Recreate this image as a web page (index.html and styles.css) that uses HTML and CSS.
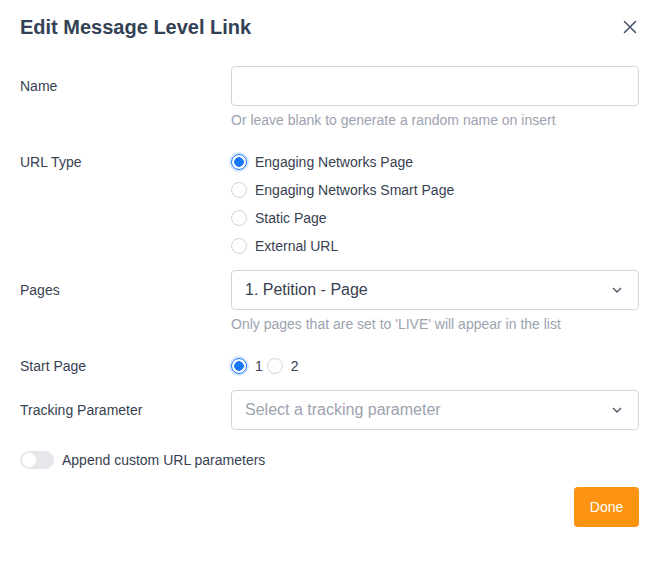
FILE: index.html
```html
<!DOCTYPE html>
<html>
<head>
    <title>Edit Message Level Link</title>
    <link rel="stylesheet" href="styles.css">
</head>
<body>
    <div class="modal">
        <div class="modal-header">
            <h1>Edit Message Level Link</h1>
            <button class="close" type="button" aria-label="Close">
                <svg width="14" height="14" viewBox="0 0 14 14"><path d="M1.5 1.5l11 11M12.5 1.5l-11 11" stroke="#475569" stroke-width="1.6" stroke-linecap="round"/></svg>
            </button>
        </div>

        <form class="modal-body">
            <div class="row">
                <label class="label" for="name">Name</label>
                <div class="field">
                    <input class="text-input" type="text" id="name">
                    <div class="help">Or leave blank to generate a random name on insert</div>
                </div>
            </div>

            <div class="row">
                <div class="label label-radio">URL Type</div>
                <div class="field radio-list">
                    <label class="radio"><input type="radio" name="urlType" checked> Engaging Networks Page</label>
                    <label class="radio"><input type="radio" name="urlType"> Engaging Networks Smart Page</label>
                    <label class="radio"><input type="radio" name="urlType"> Static Page</label>
                    <label class="radio"><input type="radio" name="urlType"> External URL</label>
                </div>
            </div>

            <div class="row">
                <label class="label" for="pages">Pages</label>
                <div class="field">
                    <div class="select" id="pages">
                        <span>1. Petition - Page</span>
                        <svg class="chevron" width="10" height="6" viewBox="0 0 10 6"><path d="M1 1l4 4 4-4" fill="none" stroke="#4b5563" stroke-width="1.4"/></svg>
                    </div>
                    <div class="help">Only pages that are set to 'LIVE' will appear in the list</div>
                </div>
            </div>

            <div class="row">
                <div class="label label-radio">Start Page</div>
                <div class="field radio-inline">
                    <label class="radio"><input type="radio" name="startPage" checked> 1</label>
                    <label class="radio"><input type="radio" name="startPage"> 2</label>
                </div>
            </div>

            <div class="row">
                <label class="label" for="tracking">Tracking Parameter</label>
                <div class="field">
                    <div class="select placeholder" id="tracking">
                        <span>Select a tracking parameter</span>
                        <svg class="chevron" width="10" height="6" viewBox="0 0 10 6"><path d="M1 1l4 4 4-4" fill="none" stroke="#4b5563" stroke-width="1.4"/></svg>
                    </div>
                </div>
            </div>

            <label class="toggle-row">
                <span class="toggle"><span class="knob"></span></span>
                Append custom URL parameters
            </label>

            <div class="modal-footer">
                <button class="btn-done" type="button">Done</button>
            </div>
        </form>
    </div>
</body>
</html>
```

FILE: styles.css
```css
html, body {
    padding: 0;
    margin: 0;
    background: white;
    font-family: "Liberation Sans", Arial, Helvetica, sans-serif;
    color: #374151;
}
.modal {
    width: 660px;
    box-sizing: border-box;
    padding: 0 21px 0 20px;
}
.modal-header {
    height: 54px;
    display: flex;
    align-items: center;
    justify-content: space-between;
}
.modal-header h1 {
    margin: 0;
    font-size: 20px;
    font-weight: bold;
    color: #334155;
}
.close {
    border: none;
    background: none;
    padding: 0;
    margin-right: 2px;
    width: 14px;
    height: 14px;
    display: flex;
}
.modal-body {
    padding-top: 12px;
    display: flex;
    flex-direction: column;
    gap: 12px;
}
.row {
    display: grid;
    grid-template-columns: 211px 1fr;
}
.label {
    font-size: 14px;
    line-height: 40px;
}
.label-radio {
    line-height: 24px;
}
.text-input, .select {
    box-sizing: border-box;
    width: 100%;
    height: 40px;
    border: 1px solid #d1d5db;
    border-radius: 4px;
    font-family: inherit;
    font-size: 16px;
    outline: none;
}
.select {
    display: flex;
    align-items: center;
    justify-content: space-between;
    padding: 0 16px 0 13px;
    color: #374151;
}
.select.placeholder {
    color: #9ca3af;
}
.help {
    margin: 4px 0 8px;
    font-size: 14px;
    line-height: 20px;
    color: #9ca3af;
}
.radio-list {
    display: flex;
    flex-direction: column;
    gap: 4px;
}
.radio-inline {
    display: flex;
    gap: 4px;
}
.radio {
    display: flex;
    align-items: center;
    height: 24px;
    font-size: 14px;
    gap: 8px;
}
.radio input {
    appearance: none;
    margin: 0;
    width: 16px;
    height: 16px;
    border: 1px solid #d1d5db;
    border-radius: 50%;
    background: white;
    box-sizing: border-box;
}
.radio input:checked {
    border-color: #1677ff;
    background: radial-gradient(circle, #1677ff 0 4.5px, white 5px);
    box-shadow: 0 0 0 2px rgba(22, 119, 255, 0.18);
}
.toggle-row {
    display: flex;
    align-items: center;
    gap: 8px;
    height: 24px;
    margin-top: 6px;
    font-size: 14px;
}
.toggle {
    width: 34px;
    height: 18px;
    border-radius: 9px;
    background: #e5e7eb;
    display: flex;
    align-items: center;
    padding: 0 2px;
    box-sizing: border-box;
}
.knob {
    width: 14px;
    height: 14px;
    border-radius: 50%;
    background: white;
}
.modal-footer {
    display: flex;
    justify-content: flex-end;
    margin-top: 3px;
}
.btn-done {
    width: 65px;
    height: 40px;
    border: none;
    border-radius: 4px;
    background: #fd9411;
    color: white;
    font-family: inherit;
    font-size: 14px;
}
```
